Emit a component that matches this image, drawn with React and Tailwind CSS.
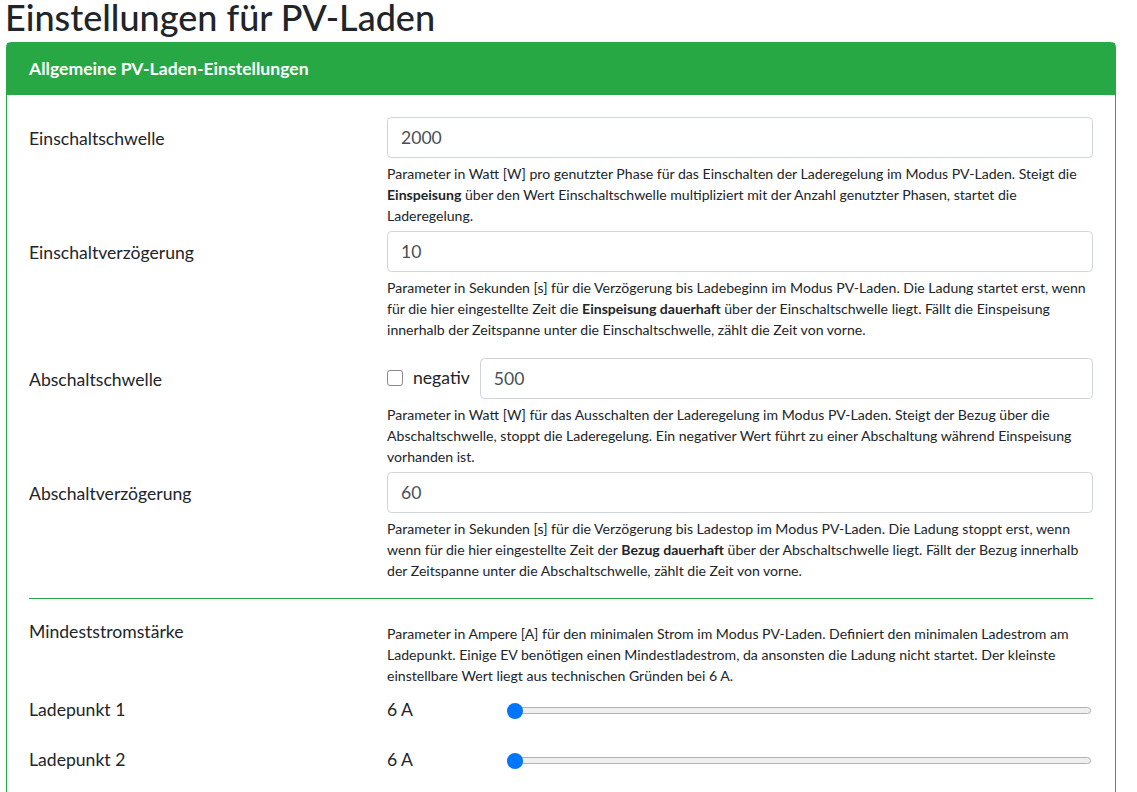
import React from 'react';

const Help = ({ children }) => (
    <div className="mt-[5px] text-[14.08px] leading-[21px] text-[#212529]">{children}</div>
);

const Field = ({ value }) => (
    <div className="h-[41px] flex-1 rounded-[4.4px] border border-[#ced4da] bg-white px-[13px] text-[17.6px] leading-[39px] text-[#495057]">
        {value}
    </div>
);

const Row = ({ label, className = '', labelPad = 'pt-[9px]', children }) => (
    <div className={`flex ${className}`}>
        <div className={`w-[358px] shrink-0 text-[17.6px] leading-[26.4px] ${labelPad}`}>{label}</div>
        <div className="min-w-0 flex-1">{children}</div>
    </div>
);

const SliderRow = ({ label, value }) => (
    <div className="flex h-[50px] items-center text-[17.6px]">
        <div className="w-[358px] shrink-0">{label}</div>
        <div className="w-[120px] shrink-0">{value}</div>
        <div className="relative mr-[2px] h-[7px] flex-1 rounded-full border border-[#b2b2b2] bg-[#efefef]">
            <span className="absolute left-[-1px] top-1/2 h-[16px] w-[16px] -translate-y-1/2 rounded-full bg-[#0075ff]" />
        </div>
    </div>
);

export default function App() {
    return (
        <div className="min-h-screen bg-white font-['Lato',sans-serif] text-[#212529]">
            <div className="h-[43px] pl-[5px]">
                <h1 className="-mt-px text-[36px] font-medium leading-[36px]">Einstellungen für PV-Laden</h1>
            </div>

            <div className="ml-[6px] w-[1110px] rounded-[4.4px] border border-[#28a745]">
                <div className="flex h-[52px] items-center bg-[#28a745] px-[22px] text-[17.6px] font-bold text-white">
                    Allgemeine PV-Laden-Einstellungen
                </div>

                <div className="px-[22px] pb-[22px] pt-[22px]">
                    <Row label="Einschaltschwelle" className="mb-[5px]">
                        <Field value="2000" />
                        <Help>
                            Parameter in Watt [W] pro genutzter Phase für das Einschalten der Laderegelung im Modus PV-Laden. Steigt die<br />
                            <b>Einspeisung</b> über den Wert Einschaltschwelle multipliziert mit der Anzahl genutzter Phasen, startet die<br />
                            Laderegelung.
                        </Help>
                    </Row>

                    <Row label="Einschaltverzögerung" className="mb-[17.5px]">
                        <Field value="10" />
                        <Help>
                            Parameter in Sekunden [s] für die Verzögerung bis Ladebeginn im Modus PV-Laden. Die Ladung startet erst, wenn<br />
                            für die hier eingestellte Zeit die <b>Einspeisung dauerhaft</b> über der Einschaltschwelle liegt. Fällt die Einspeisung<br />
                            innerhalb der Zeitspanne unter die Einschaltschwelle, zählt die Zeit von vorne.
                        </Help>
                    </Row>

                    <Row label="Abschaltschwelle" className="mb-[5px]">
                        <div className="flex items-center">
                            <span className="h-[16px] w-[16px] shrink-0 rounded-[3px] border border-[#8a8a8a] bg-white" />
                            <span className="ml-[10px] mr-[10px] text-[17.6px]">negativ</span>
                            <Field value="500" />
                        </div>
                        <Help>
                            Parameter in Watt [W] für das Ausschalten der Laderegelung im Modus PV-Laden. Steigt der Bezug über die<br />
                            Abschaltschwelle, stoppt die Laderegelung. Ein negativer Wert führt zu einer Abschaltung während Einspeisung<br />
                            vorhanden ist.
                        </Help>
                    </Row>

                    <Row label="Abschaltverzögerung">
                        <Field value="60" />
                        <Help>
                            Parameter in Sekunden [s] für die Verzögerung bis Ladestop im Modus PV-Laden. Die Ladung stoppt erst, wenn<br />
                            wenn für die hier eingestellte Zeit der <b>Bezug dauerhaft</b> über der Abschaltschwelle liegt. Fällt der Bezug innerhalb<br />
                            der Zeitspanne unter die Abschaltschwelle, zählt die Zeit von vorne.
                        </Help>
                    </Row>

                    <hr className="mb-[13px] mt-[17px] border-t border-[#28a745]" />

                    <Row label="Mindeststromstärke" labelPad="pt-[7px]">
                        <div className="pt-[6px]">
                            <Help>
                                Parameter in Ampere [A] für den minimalen Strom im Modus PV-Laden. Definiert den minimalen Ladestrom am<br />
                                Ladepunkt. Einige EV benötigen einen Mindestladestrom, da ansonsten die Ladung nicht startet. Der kleinste<br />
                                einstellbare Wert liegt aus technischen Gründen bei 6 A.
                            </Help>
                        </div>
                    </Row>

                    <SliderRow label="Ladepunkt 1" value="6 A" />
                    <SliderRow label="Ladepunkt 2" value="6 A" />
                </div>
            </div>
        </div>
    );
}
